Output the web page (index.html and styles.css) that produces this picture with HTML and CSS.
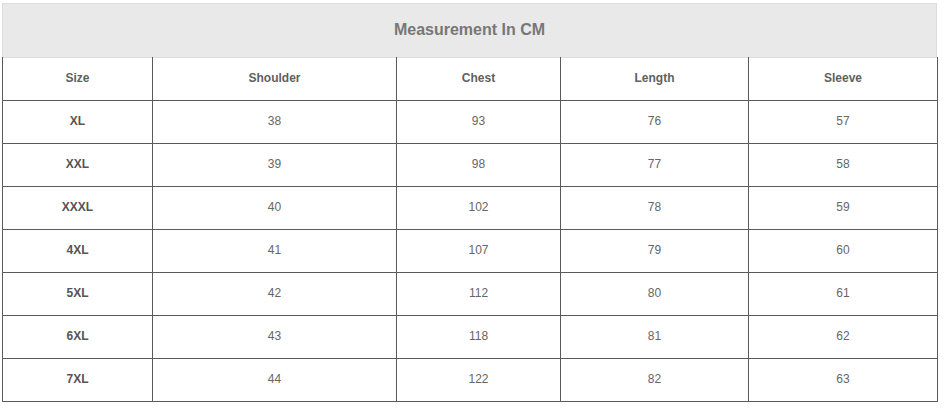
FILE: index.html
```html
<!DOCTYPE html>
<html>
<head>
<meta charset="utf-8">
<link rel="stylesheet" href="styles.css">
</head>
<body>
<div class="chart">
  <div class="title">Measurement In CM</div>
  <table class="sizes">
    <colgroup>
      <col class="c1"><col class="c2"><col class="c3"><col class="c4"><col class="c5">
    </colgroup>
    <thead>
      <tr><th>Size</th><th>Shoulder</th><th>Chest</th><th>Length</th><th>Sleeve</th></tr>
    </thead>
    <tbody>
      <tr><th>XL</th><td>38</td><td>93</td><td>76</td><td>57</td></tr>
      <tr><th>XXL</th><td>39</td><td>98</td><td>77</td><td>58</td></tr>
      <tr><th>XXXL</th><td>40</td><td>102</td><td>78</td><td>59</td></tr>
      <tr><th>4XL</th><td>41</td><td>107</td><td>79</td><td>60</td></tr>
      <tr><th>5XL</th><td>42</td><td>112</td><td>80</td><td>61</td></tr>
      <tr><th>6XL</th><td>43</td><td>118</td><td>81</td><td>62</td></tr>
      <tr><th>7XL</th><td>44</td><td>122</td><td>82</td><td>63</td></tr>
    </tbody>
  </table>
</div>
</body>
</html>
```
FILE: styles.css
```css
html, body {
  margin: 0;
  padding: 0;
  background: #fff;
}
body {
  font-family: "Liberation Sans", Arial, sans-serif;
}
.chart {
  width: 935px;
  padding: 3px 0 0 2px;
}
.title {
  height: 52px;
  background: #e9e9e9;
  border: 1px solid #dcdcdc;
  color: #777;
  font-size: 16px;
  font-weight: bold;
  display: flex;
  align-items: center;
  justify-content: center;
  padding-bottom: 1px;
  box-sizing: content-box;
}
.sizes {
  width: 935px;
  border-collapse: collapse;
  table-layout: fixed;
  margin-top: -1px;
}
.c1 { width: 150px; }
.c2 { width: 244px; }
.c3 { width: 164px; }
.c4 { width: 188px; }
.c5 { width: 189px; }
.sizes th, .sizes td {
  border: 1px solid #5a5a5a;
  height: 40px;
  padding: 0 0 2px 0;
  text-align: center;
  vertical-align: middle;
  font-size: 12px;
  color: #666;
}
.sizes thead th {
  height: 41px;
  border-top: none;
  color: #5f5f5f;
  font-weight: bold;
}
.sizes tbody th {
  font-weight: bold;
  color: #555;
}
.sizes td {
  font-weight: normal;
}
```
